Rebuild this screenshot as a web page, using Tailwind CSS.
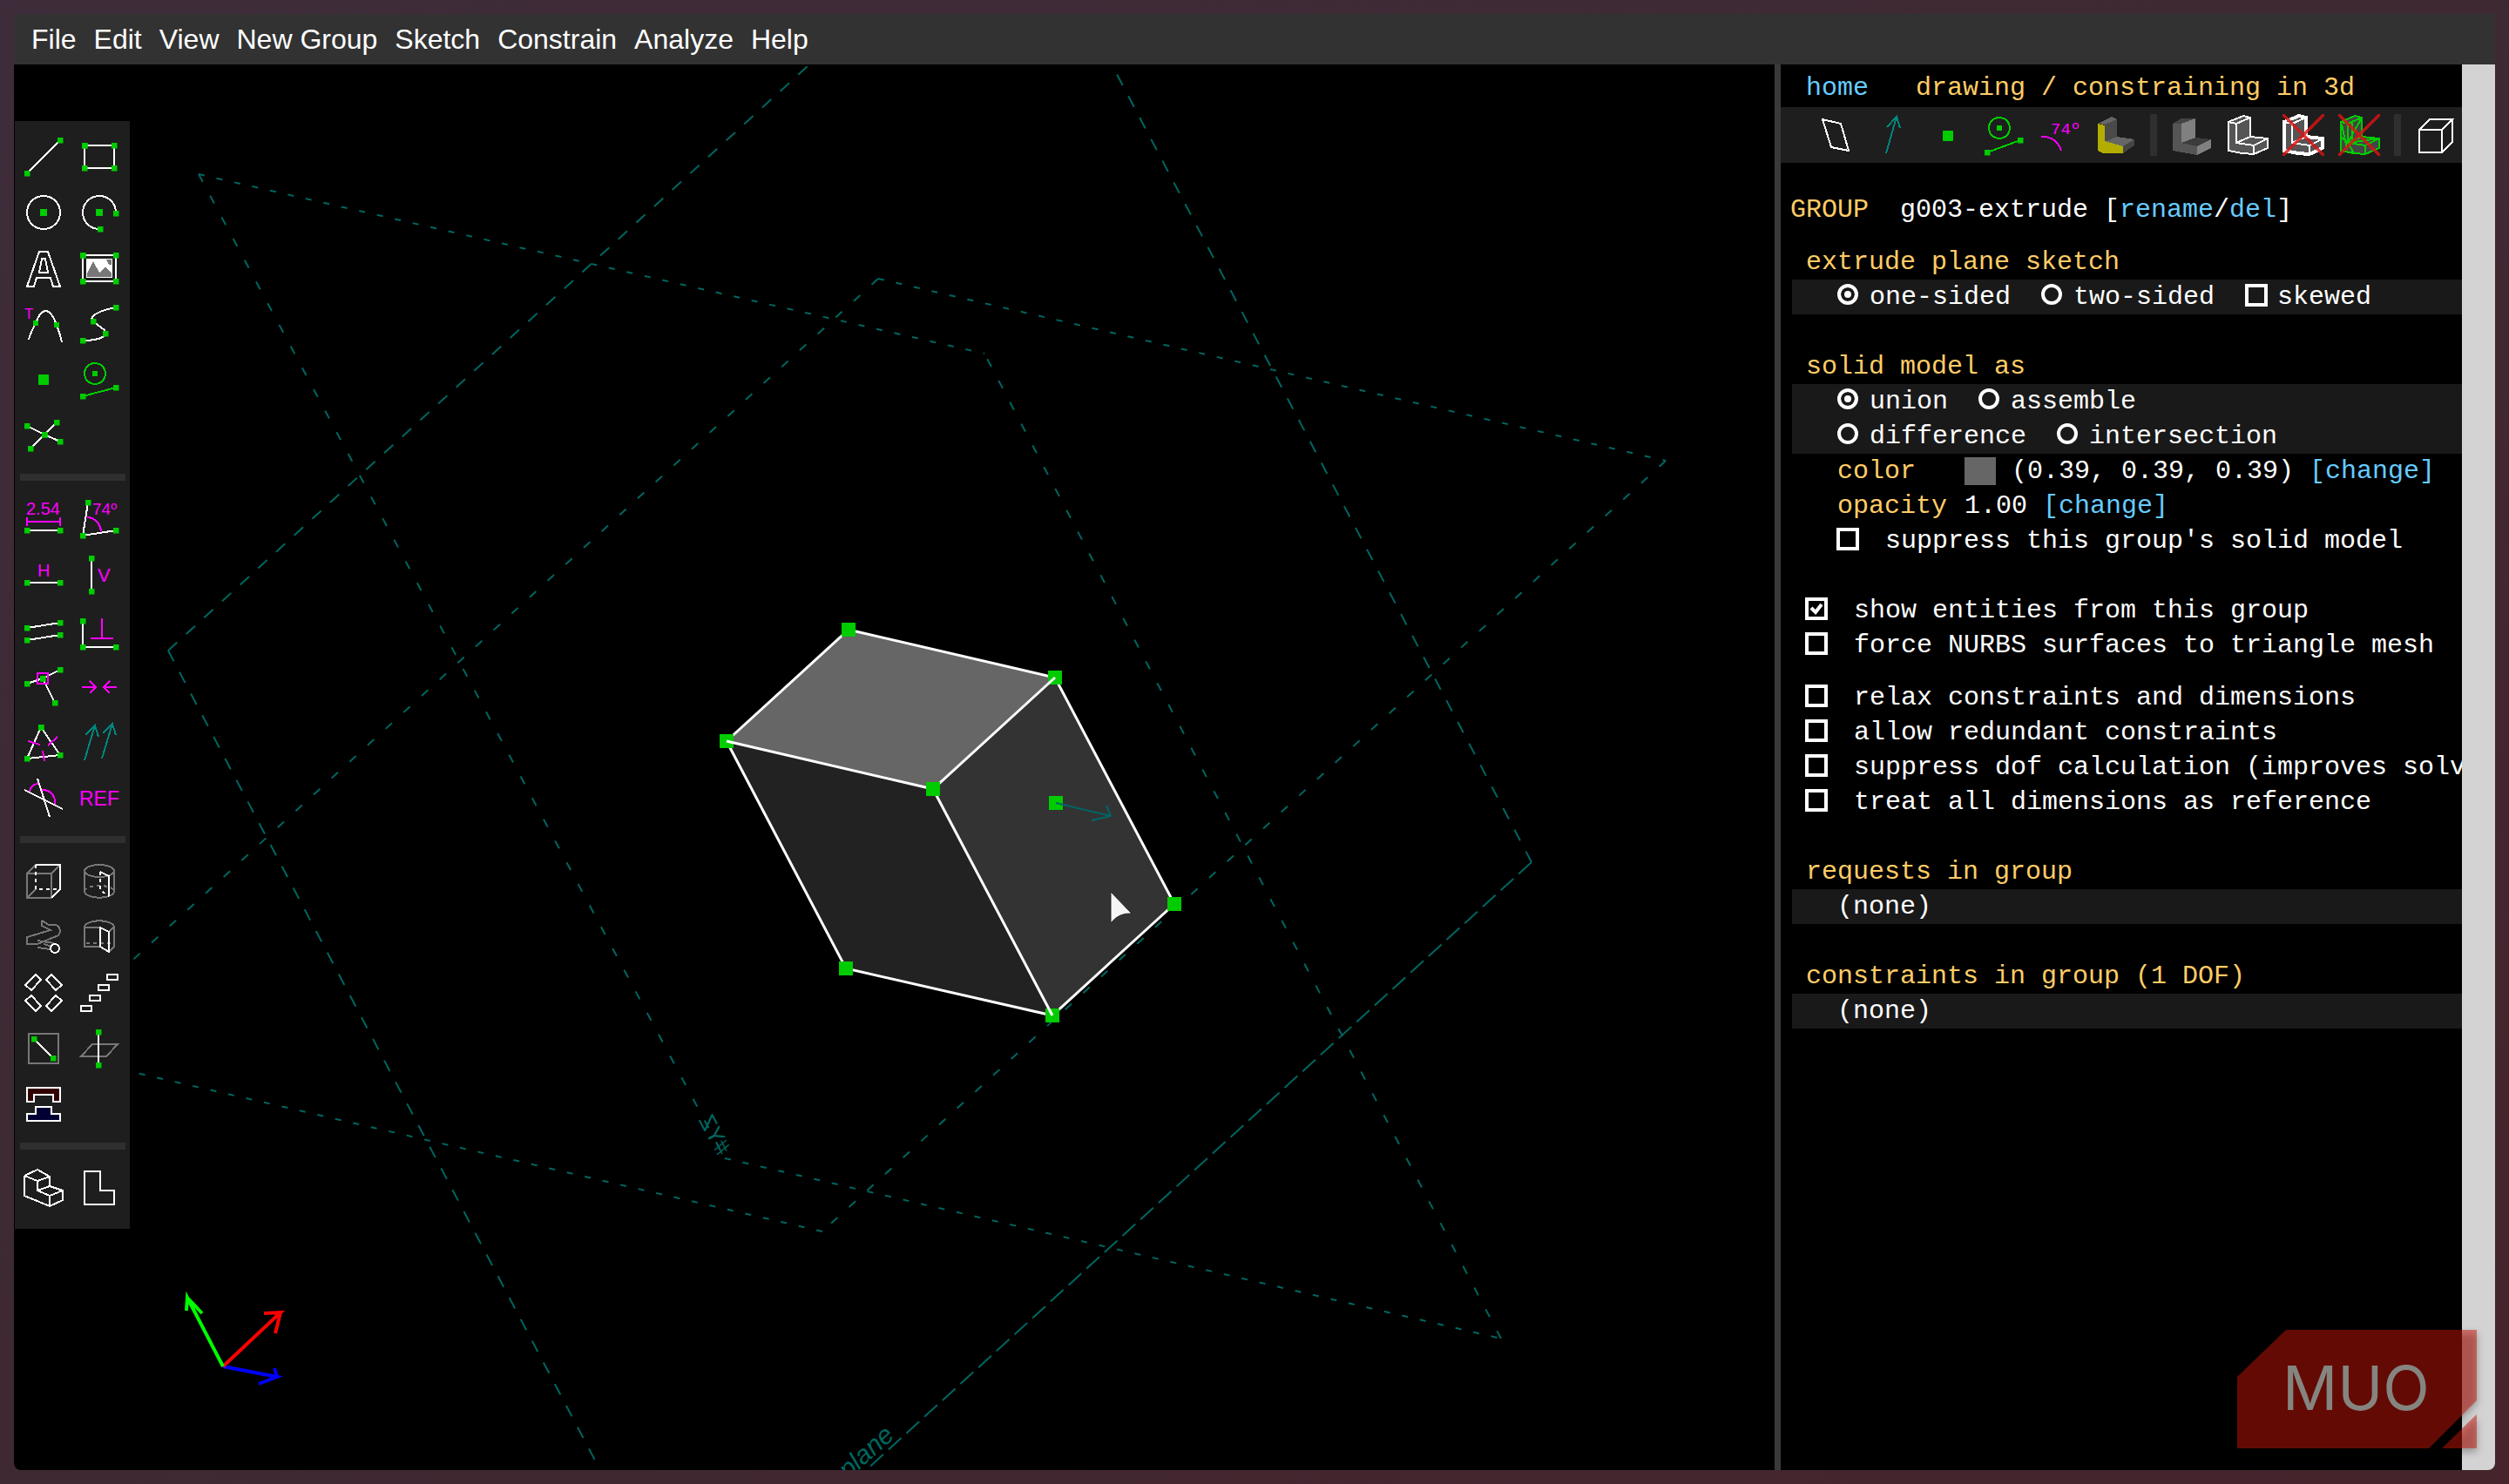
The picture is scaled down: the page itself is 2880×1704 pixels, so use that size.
<!DOCTYPE html>
<html lang="en">
<head>
    <meta charset="UTF-8">
    <meta name="viewport" content="width=device-width, initial-scale=1.0">
    <script src="https://cdn.jsdelivr.net/npm/@tailwindcss/browser@4"></script>
    <title>SolveSpace</title>
</head>
<body class="relative flex h-screen flex-col overflow-hidden bg-linear-to-br from-[#3f2c3a] via-[#3e2932] to-[#46242c] p-4 font-['Liberation_Sans',sans-serif]">

    <!-- Shared markers: green end points -->
    <svg class="absolute size-0" aria-hidden="true">
        <defs>
            <marker id="dot" markerUnits="userSpaceOnUse" markerWidth="7" markerHeight="7" refX="3.5" refY="3.5">
                <rect width="7" height="7" fill="#00cc00" />
            </marker>
            <marker id="vertex" markerUnits="userSpaceOnUse" markerWidth="16" markerHeight="16" refX="8" refY="8">
                <rect width="16" height="16" fill="#00cc00" />
            </marker>
        </defs>
    </svg>

    <!-- Menu bar -->
    <nav class="flex h-[58px] shrink-0 items-center gap-5 bg-[#323232] pl-5 text-[32px] text-white">
        <button>File</button>
        <button>Edit</button>
        <button>View</button>
        <button>New Group</button>
        <button>Sketch</button>
        <button>Constrain</button>
        <button>Analyze</button>
        <button>Help</button>
    </nav>

    <div class="flex min-h-0 flex-1 overflow-hidden rounded-b-lg bg-black">

        <!-- Canvas -->
        <main class="relative min-w-0 flex-1 overflow-hidden">
            <svg class="absolute inset-0 size-full" viewBox="16 74 2021 1614" preserveAspectRatio="xMinYMin slice" fill="none">
                <!-- Work planes -->
                <g stroke="#00665f" stroke-width="2">
                    <path stroke-dasharray="7 14" d="M228 200L1130 406M832 1330L1723 1537M1008 320L1912 529M944 1414L40 1205" />
                    <path stroke-dasharray="10 18" d="M228 200L832 1330M1723 1537L1130 406M1008 320L40 1205M1912 529L944 1414" />
                    <path stroke-dasharray="14 14" d="M193 747L927 76M193 747L690 1690M1758 990L1274 70" />
                    <path stroke-dasharray="20 8" d="M1758 990L992 1690" />
                </g>
                <g fill="#00665f" font-size="26">
                    <text transform="translate(824 1328) rotate(62) scale(-1 1)">#YZ</text>
                    <text transform="translate(1028 1650) rotate(-42)" text-anchor="end" font-style="italic" font-size="30">plane</text>
                </g>

                <!-- Solid -->
                <path fill="#666666" d="M974 723L1211 778L1071 906L834 851Z" />
                <path fill="#333333" d="M1211 778L1348 1038L1208 1166L1071 906Z" />
                <path fill="#222222" d="M834 851L1071 906L1208 1166L971 1112Z" />
                <path class="[marker:url(#vertex)]" stroke="#ffffff" stroke-width="3" d="M974 723L1211 778L1348 1038L1208 1166L971 1112L834 851Z" />
                <path stroke="#ffffff" stroke-width="3" d="M834 851L1071 906L1211 778M1071 906L1208 1166" />
                <rect x="1063" y="898" width="16" height="16" fill="#00cc00" />
                <rect x="1204" y="914" width="16" height="16" fill="#00cc00" />
                <path stroke="#006666" stroke-width="2" d="M1212 922L1275 937L1253 942M1275 937L1270 925" />

                <!-- Axes -->
                <g stroke-width="4">
                    <path stroke="#0000ff" d="M256 1569L318 1581L297 1589M318 1581L315 1571" />
                    <path stroke="#ff0000" d="M256 1569L322 1507L303 1508M322 1507L316 1531" />
                    <path stroke="#00ff00" d="M256 1569L215 1490L214 1505M215 1490L232 1508" />
                </g>

                <!-- Pointer -->
                <path fill="#f5f5f5" stroke="#222222" d="M1275 1024L1299 1049Q1284 1048 1275 1060Z" />
            </svg>

            <!-- Floating toolbar -->
            <div class="absolute left-px top-[65px] w-[132px] bg-[#1e1e1e] pr-[3px] pl-px pt-[9px] pb-[15px]">
                <div class="grid grid-cols-2">
                    <button class="grid h-16 place-items-center" aria-label="Line segment"><svg class="size-12" fill="none" stroke="#fff" stroke-width="2" shape-rendering="crispEdges"><path class="[marker:url(#dot)]" d="M5 43L43 5" /></svg></button>
                    <button class="grid h-16 place-items-center" aria-label="Rectangle"><svg class="size-12" fill="none" stroke="#fff" stroke-width="2" shape-rendering="crispEdges"><path class="[marker:url(#dot)]" d="M7 11H41V37H7Z" /></svg></button>
                    <button class="grid h-16 place-items-center" aria-label="Circle"><svg class="size-12" fill="none" stroke="#fff" stroke-width="2" shape-rendering="crispEdges"><circle cx="24" cy="24" r="19" /><path fill="#00cc00" stroke="none" d="M20 20h8v8h-8z" /></svg></button>
                    <button class="grid h-16 place-items-center" aria-label="Arc"><svg class="size-12" fill="none" stroke="#fff" stroke-width="2" shape-rendering="crispEdges"><path class="[marker:url(#dot)]" d="M43 25A19 19 0 1 0 25 43" /><path fill="#00cc00" stroke="none" d="M20 20h8v8h-8z" /></svg></button>
                    <button class="grid h-16 place-items-center" aria-label="Text"><svg class="size-12" fill="none" stroke="#fff" stroke-width="2" shape-rendering="crispEdges"><path d="M19 5H29L43 45H35L32 35H16L13 45H5ZM22 13H26L29 29H19Z" /></svg></button>
                    <button class="grid h-16 place-items-center" aria-label="Image"><svg class="size-12" fill="none" stroke="#fff" stroke-width="2" shape-rendering="crispEdges"><path fill="#fff" stroke="none" d="M9 13H39V35H9Z" /><path fill="#777" stroke="none" d="M10 34V30L17 16L24 29L31 23L38 30V34ZM32 14h6v6h-3z" /><path class="[marker:url(#dot)]" d="M5 9H43V39H5Z" /></svg></button>
                    <button class="grid h-16 place-items-center" aria-label="Tangent arc"><svg class="size-12" fill="none" stroke="#fff" stroke-width="2" shape-rendering="crispEdges"><text x="2" y="18" font-size="17" fill="#ff00ff" stroke="none">T</text><path d="M7 42Q9 34 15 23Q20 9 27 9Q33 9 39 25Q43 36 45 45" /><path fill="#00cc00" stroke="none" d="M12 20h6v6h-6zM36 22h6v6h-6z" /></svg></button>
                    <button class="grid h-16 place-items-center" aria-label="Spline"><svg class="size-12" fill="none" stroke="#fff" stroke-width="2" shape-rendering="crispEdges"><path class="[marker:url(#dot)]" d="M43 5C26 8 10 15 17 21C26 29 32 30 31 35C29 41 16 43 5 43" /></svg></button>
                    <button class="grid h-16 place-items-center" aria-label="Point"><svg class="size-12"><rect x="18" y="18" width="12" height="12" rx="1" fill="#00cc00" /></svg></button>
                    <button class="grid h-16 place-items-center" aria-label="Construction"><svg class="size-12" fill="none" stroke="#00cc00" stroke-width="2" shape-rendering="crispEdges"><circle cx="19" cy="17" r="12" /><path fill="#00cc00" stroke="none" d="M16 14h6v6h-6z" /><path class="[marker:url(#dot)]" d="M5 43L43 33" /></svg></button>
                    <button class="grid h-16 place-items-center" aria-label="Split curves"><svg class="size-12" fill="none" stroke="#fff" stroke-width="2" shape-rendering="crispEdges"><path class="[marker:url(#dot)]" d="M5 13L25 23L43 31M39 9L25 23L9 39" /></svg></button>
                </div>
                <hr class="mr-0.5 ml-[5px] my-3 h-2 border-0 bg-[#2f2f2f]">
                <div class="grid grid-cols-2">
                    <button class="grid h-16 place-items-center" aria-label="Distance"><svg class="size-12" fill="none" stroke="#fff" stroke-width="2" shape-rendering="crispEdges"><text x="4" y="19" font-size="20" fill="#ff00ff" stroke="none">2.54</text><path stroke="#ff00ff" d="M5 27H43M5 22V32M43 22V32" /><path class="[marker:url(#dot)]" d="M5 37H43" /></svg></button>
                    <button class="grid h-16 place-items-center" aria-label="Angle"><svg class="size-12" fill="none" stroke="#fff" stroke-width="2" shape-rendering="crispEdges"><path stroke="#ff00ff" d="M10 22C18 22 25 29 26 38" /><text x="16" y="19" font-size="19" fill="#ff00ff" stroke="none">74º</text><path class="[marker:url(#dot)]" d="M11 5L5 43L43 37" /></svg></button>
                    <button class="grid h-16 place-items-center" aria-label="Horizontal"><svg class="size-12" fill="none" stroke="#fff" stroke-width="2" shape-rendering="crispEdges"><text x="17" y="26" font-size="20" fill="#ff00ff" stroke="none">H</text><path class="[marker:url(#dot)]" d="M5 33H43" /></svg></button>
                    <button class="grid h-16 place-items-center" aria-label="Vertical"><svg class="size-12" fill="none" stroke="#fff" stroke-width="2" shape-rendering="crispEdges"><text x="22" y="32" font-size="22" fill="#ff00ff" stroke="none">V</text><path class="[marker:url(#dot)]" d="M15 5V43" /></svg></button>
                    <button class="grid h-16 place-items-center" aria-label="Parallel"><svg class="size-12" fill="none" stroke="#fff" stroke-width="2" shape-rendering="crispEdges"><path class="[marker:url(#dot)]" d="M5 21L43 15M5 35L43 29" /></svg></button>
                    <button class="grid h-16 place-items-center" aria-label="Perpendicular"><svg class="size-12" fill="none" stroke="#fff" stroke-width="2" shape-rendering="crispEdges"><path stroke="#ff00ff" d="M27 10V33M14 33H40" /><path class="[marker:url(#dot)]" d="M5 13V43H43" /></svg></button>
                    <button class="grid h-16 place-items-center" aria-label="Point on line"><svg class="size-12" fill="none" stroke="#fff" stroke-width="2" shape-rendering="crispEdges"><path class="[marker:url(#dot)]" d="M5 21L23 15L43 5M23 15L37 43" /><path stroke="#ff00ff" d="M17 9H29V21H17Z" /></svg></button>
                    <button class="grid h-16 place-items-center" aria-label="Symmetric"><svg class="size-12" fill="none" stroke="#ff00ff" stroke-width="2" shape-rendering="crispEdges"><path d="M4 25H20M13 18L20 25L13 32M44 25H29M36 18L29 25L36 32" /></svg></button>
                    <button class="grid h-16 place-items-center" aria-label="Equal"><svg class="size-12" fill="none" stroke="#fff" stroke-width="2" shape-rendering="crispEdges"><path class="[marker:url(#dot)]" d="M21 7L5 43L43 39Z" /><path stroke="#ff00ff" d="M6 23L20 27M40 18L29 28M23 34L25 46" /></svg></button>
                    <button class="grid h-16 place-items-center" aria-label="Same orientation"><svg class="size-12" fill="none" stroke="#00857c" stroke-width="2" shape-rendering="crispEdges"><path d="M7 45L19 5M8 16L19 5L23 18M27 43L39 3M28 14L39 3L43 16" /></svg></button>
                    <button class="grid h-16 place-items-center" aria-label="Other angle"><svg class="size-12" fill="none" stroke="#fff" stroke-width="2" shape-rendering="crispEdges"><path stroke="#ff00ff" d="M8 17C9 11 12 8 18 8M20 16C30 13 38 20 37 32" /><path d="M2 15L46 37M17 2L31 46" /></svg></button>
                    <button class="grid h-16 place-items-center" aria-label="Reference dimension"><svg class="size-12" fill="#ff00ff"><text x="1" y="33" font-size="23">REF</text></svg></button>
                </div>
                <hr class="mr-0.5 ml-[5px] my-3 h-2 border-0 bg-[#2f2f2f]">
                <div class="grid grid-cols-2">
                    <button class="grid h-16 place-items-center" aria-label="Extrude"><svg class="size-12" fill="none" stroke="#777" stroke-width="2" shape-rendering="crispEdges"><path d="M5 15H33V43H5ZM5 15L15 5M33 15L43 5M5 43L15 33" /><path stroke="#fff" d="M15 5H43V33L33 43" /><path stroke="#fff" stroke-dasharray="4 4" d="M15 5V33H43" /></svg></button>
                    <button class="grid h-16 place-items-center" aria-label="Lathe"><svg class="size-12" fill="none" stroke="#777" stroke-width="2" shape-rendering="crispEdges"><ellipse cx="24" cy="12" rx="17" ry="7" /><path d="M7 12V36C10 45 38 45 41 36V12" /><path stroke-dasharray="4 4" d="M7 35C10 27 38 27 41 35" /><path stroke="#fff" d="M25 13L35 18V41" /><path stroke="#fff" stroke-dasharray="4 4" d="M25 13V34L35 41" /></svg></button>
                    <button class="grid h-16 place-items-center" aria-label="Helix"><svg class="size-12" fill="none" stroke="#777" stroke-width="2" shape-rendering="crispEdges"><path d="M22 5V11L32 16L5 24V32H17L41 22C45 16 42 10 36 10H30L22 5M17 28L36 31M17 36L32 38M24 32L34 35" /><circle cx="37" cy="37" r="5" stroke="#fff" /></svg></button>
                    <button class="grid h-16 place-items-center" aria-label="Revolve"><svg class="size-12" fill="none" stroke="#777" stroke-width="2" shape-rendering="crispEdges"><path d="M25 35H7V12C10 3 38 3 41 12V35L35 41M7 13H25M41 12L35 18" /><path stroke-dasharray="4 4" d="M9 31H39" /><path stroke="#fff" d="M25 13L35 18V41L25 35Z" /></svg></button>
                    <button class="grid h-16 place-items-center" aria-label="Step rotating"><svg class="size-12" fill="none" stroke="#fff" stroke-width="2" shape-rendering="crispEdges"><path d="M15 3L21 9L10 21L3 15ZM33 3L27 9L38 21L45 15ZM15 45L21 39L10 27L3 33ZM33 45L27 39L38 27L45 33Z" /></svg></button>
                    <button class="grid h-16 place-items-center" aria-label="Step translating"><svg class="size-12" fill="none" stroke="#fff" stroke-width="2" shape-rendering="crispEdges"><path d="M33 3h12v6h-12zM23 15h12v6h-12zM13 27h12v6h-12zM3 39h12v6h-12z" /></svg></button>
                    <button class="grid h-16 place-items-center" aria-label="Sketch in workplane"><svg class="size-12" fill="none" stroke="#fff" stroke-width="2" shape-rendering="crispEdges"><path stroke="#777" d="M7 7H41V41H7Z" /><path class="[marker:url(#dot)]" d="M13 13L35 35" /></svg></button>
                    <button class="grid h-16 place-items-center" aria-label="Sketch in 3d"><svg class="size-12" fill="none" stroke="#fff" stroke-width="2" shape-rendering="crispEdges"><path stroke="#777" d="M16 19H45L32 33H3Z" /><path class="[marker:url(#dot)]" d="M23 5V43" /></svg></button>
                    <button class="grid h-16 place-items-center" aria-label="Assemble"><svg class="size-12" stroke="#fff" stroke-width="2" shape-rendering="crispEdges"><path fill="#330000" d="M5 5H43V21H35V13H13V21H5Z" /><path fill="#000033" d="M5 43H43V35H33V27H15V35H5Z" /></svg></button>
                </div>
                <hr class="mr-0.5 ml-[5px] my-3 h-2 border-0 bg-[#2f2f2f]">
                <div class="grid grid-cols-2">
                    <button class="grid h-16 place-items-center" aria-label="Nearest isometric view"><svg class="size-12" fill="none" stroke="#fff" stroke-width="2" shape-rendering="crispEdges"><path d="M2 10L17 3L31 11V22L17 27V16L31 11M2 10L17 16M2 10V33L31 45L46 38V27L31 22M17 27L31 33V45M31 33L46 27" /></svg></button>
                    <button class="grid h-16 place-items-center" aria-label="Align to workplane"><svg class="size-12" fill="none" stroke="#fff" stroke-width="2" shape-rendering="crispEdges"><path d="M7 5H25V27H41V43H7Z" /></svg></button>
                </div>
            </div>
        </main>

        <!-- Property browser -->
        <aside class="flex w-[827px] shrink-0 border-l-7 border-[#3a3a3a]">
            <div class="min-w-0 flex-1 overflow-hidden whitespace-nowrap pt-[7px] font-['Liberation_Mono',monospace] text-[30px] leading-10 text-white">
                <header class="flex gap-[54px] pl-[29px] text-[#ffcc66]">
                    <a href="#" class="text-[#66ccff]">home</a>
                    <h1>drawing / constraining in 3d</h1>
                </header>

                <div class="mt-0.5 flex h-16 items-center bg-[#1e1e1e] pl-8">
                    <button class="grid size-16 shrink-0 place-items-center" aria-label="Show workplanes"><svg class="size-12" fill="none" stroke="#fff" stroke-width="2" shape-rendering="crispEdges"><path d="M8 6L29 11L38 42L18 38Z" /></svg></button>
                    <button class="grid size-16 shrink-0 place-items-center" aria-label="Show normals"><svg class="size-12" fill="none" stroke="#00857c" stroke-width="2" shape-rendering="crispEdges"><path d="M17 45L29 3M18 15L29 3L33 16" /></svg></button>
                    <button class="grid size-16 shrink-0 place-items-center" aria-label="Show points"><svg class="size-12"><rect x="18" y="19" width="12" height="12" rx="1" fill="#00cc00" /></svg></button>
                    <button class="grid size-16 shrink-0 place-items-center" aria-label="Show construction"><svg class="size-12" fill="none" stroke="#00cc00" stroke-width="2" shape-rendering="crispEdges"><circle cx="19" cy="16" r="12" /><path fill="#00cc00" stroke="none" d="M16 13h6v6h-6z" /><path class="[marker:url(#dot)]" d="M5 44L43 30" /></svg></button>
                    <button class="grid size-16 shrink-0 place-items-center" aria-label="Show constraints"><svg class="size-12" fill="none" stroke="#ff00ff" stroke-width="2" shape-rendering="crispEdges"><text x="14" y="23" font-size="19" fill="#ff00ff" stroke="none">74º</text><path d="M3 26C14 25 23 32 26 42" /></svg></button>
                    <button class="grid size-16 shrink-0 place-items-center" aria-label="Highlight faces"><svg class="size-12" shape-rendering="crispEdges"><path fill="#666" d="M4 11L20 3L26 6L12 12Z" /><path fill="#4a4a4a" d="M12 12L26 6V27L12 32Z" /><path fill="#666" d="M12 32L26 26L46 29L33 37Z" /><path fill="#444" d="M33 37L46 29V36L33 45Z" /><path fill="#b3ad00" d="M4 11L12 13V31L33 37V45H10L4 42Z" /></svg></button>
                    <span class="mx-2 h-12 w-2 shrink-0 bg-[#2f2f2f]"></span>
                    <button class="grid size-16 shrink-0 place-items-center" aria-label="Show shaded"><svg class="size-12" shape-rendering="crispEdges"><path fill="#444" d="M2 11L12 5H28L12 11Z" /><path fill="#555" d="M2 11H12V33L30 37V47L2 42Z" /><path fill="#808080" d="M12 11L28 5V27L12 33Z" /><path fill="#3c3c3c" d="M12 33L28 27L46 29L30 37Z" /><path fill="#808080" d="M30 37L46 29V39L30 47Z" /></svg></button>
                    <button class="grid size-16 shrink-0 place-items-center" aria-label="Show edges"><svg class="size-12" fill="#555" stroke="#fff" stroke-width="2" shape-rendering="crispEdges"><path d="M2 9L19 2L27 4V26L47 28V39L31 46L18 45L2 42Z" /><path d="M2 9L11 11L27 4M11 11V33L31 36V46M11 33L27 26M31 36L47 28" /></svg></button>
                    <button class="grid size-16 shrink-0 place-items-center" aria-label="Show outlines"><svg class="size-12" fill="#555" stroke="#fff" shape-rendering="crispEdges"><path stroke-width="4" d="M2 9L19 2L27 4V26L46 28V39L31 46L18 45L2 42Z" /><path stroke-width="2" d="M2 9L11 11L27 4M11 11V33L31 36V46M11 33L27 26M31 36L47 28" /><path stroke="#dd1111" stroke-opacity=".8" stroke-width="3" d="M0 0L48 48M48 0L0 48" /></svg></button>
                    <button class="grid size-16 shrink-0 place-items-center" aria-label="Show mesh"><svg class="size-12" fill="#444444" stroke="#00cc00" stroke-width="2" shape-rendering="crispEdges"><path d="M3 9L19 2L27 4V26L47 28V39L31 46L18 45L3 42Z" /><path fill="none" d="M3 9L11 11L27 4M11 11V33L31 36V46M11 33L27 26M31 36L47 28M11 33L27 4M16 10V29M3 26L11 33L18 45M11 33L47 28M4 12L10 40" /><path stroke="#dd1111" stroke-opacity=".8" stroke-width="3" d="M0 0L48 48M48 0L0 48" /></svg></button>
                    <span class="mx-2 h-12 w-2 shrink-0 bg-[#2f2f2f]"></span>
                    <button class="grid size-16 shrink-0 place-items-center" aria-label="Show hidden lines"><svg class="size-12" fill="none" stroke="#fff" stroke-width="2" shape-rendering="crispEdges"><path d="M5 18H31V44H5ZM5 18L17 6H43L31 18M43 6V32L31 44" /></svg></button>
                </div>

                <p class="mt-[34px] pl-[11px]"><span class="mr-9 text-[#ffcc66]">GROUP</span>g003-extrude [<a href="#" class="text-[#66ccff]">rename</a>/<a href="#" class="text-[#66ccff]">del</a>]</p>

                <h2 class="mt-5 pl-[29px] text-[#ffcc66]">extrude plane sketch</h2>
                <div class="ml-[13px] flex gap-[35px] bg-[#191919] pl-[52px]">
                    <label class="flex gap-[13px]"><input type="radio" name="sides" checked class="mt-[5px] size-6 appearance-none rounded-full border-4 border-white checked:bg-white checked:inset-shadow-[0_0_0_4px_#191919]">one-sided</label>
                    <label class="flex gap-[13px]"><input type="radio" name="sides" class="mt-[5px] size-6 appearance-none rounded-full border-4 border-white checked:bg-white checked:inset-shadow-[0_0_0_4px_#191919]">two-sided</label>
                    <label class="flex gap-[11px]"><input type="checkbox" class="mt-[5px] size-[26px] appearance-none border-4 border-white">skewed</label>
                </div>

                <h2 class="mt-10 pl-[29px] text-[#ffcc66]">solid model as</h2>
                <div class="ml-[13px] bg-[#191919] pl-[52px]">
                    <div class="flex gap-[35px]">
                        <label class="flex gap-[13px]"><input type="radio" name="combine" checked class="mt-[5px] size-6 appearance-none rounded-full border-4 border-white checked:bg-white checked:inset-shadow-[0_0_0_4px_#191919]">union</label>
                        <label class="flex gap-[13px]"><input type="radio" name="combine" class="mt-[5px] size-6 appearance-none rounded-full border-4 border-white checked:bg-white checked:inset-shadow-[0_0_0_4px_#191919]">assemble</label>
                    </div>
                    <div class="flex gap-[35px]">
                        <label class="flex gap-[13px]"><input type="radio" name="combine" class="mt-[5px] size-6 appearance-none rounded-full border-4 border-white checked:bg-white checked:inset-shadow-[0_0_0_4px_#191919]">difference</label>
                        <label class="flex gap-[13px]"><input type="radio" name="combine" class="mt-[5px] size-6 appearance-none rounded-full border-4 border-white checked:bg-white checked:inset-shadow-[0_0_0_4px_#191919]">intersection</label>
                    </div>
                </div>
                <div class="flex items-center pl-[65px]"><span class="w-[146px] text-[#ffcc66]">color</span><span class="mr-[18px] h-8 w-9 bg-[#666666]"></span><span class="mr-[18px]">(0.39, 0.39, 0.39)</span><a href="#" class="text-[#66ccff]">[change]</a></div>
                <div class="flex pl-[65px]"><span class="w-[146px] text-[#ffcc66]">opacity</span><span class="mr-[18px]">1.00</span><a href="#" class="text-[#66ccff]">[change]</a></div>
                <label class="flex gap-[30px] pl-16"><input type="checkbox" class="mt-[5px] size-[26px] appearance-none border-4 border-white">suppress this group's solid model</label>

                <div class="mt-10 pl-7">
                    <label class="flex gap-[30px]">
                        <span class="grid">
                            <input type="checkbox" checked class="peer col-start-1 row-start-1 mt-[5px] size-[26px] appearance-none border-4 border-white">
                            <svg class="invisible col-start-1 row-start-1 mt-[5px] size-[26px] peer-checked:visible" fill="none" stroke="#fff" stroke-width="4"><path d="M7 12L12 17L19 8" /></svg>
                        </span>show entities from this group
                    </label>
                    <label class="flex gap-[30px]"><input type="checkbox" class="mt-[5px] size-[26px] appearance-none border-4 border-white">force NURBS surfaces to triangle mesh</label>
                </div>
                <div class="mt-5 pl-7">
                    <label class="flex gap-[30px]"><input type="checkbox" class="mt-[5px] size-[26px] appearance-none border-4 border-white">relax constraints and dimensions</label>
                    <label class="flex gap-[30px]"><input type="checkbox" class="mt-[5px] size-[26px] appearance-none border-4 border-white">allow redundant constraints</label>
                    <label class="flex gap-[30px]"><input type="checkbox" class="mt-[5px] size-[26px] shrink-0 appearance-none border-4 border-white">suppress dof calculation (improves solv</label>
                    <label class="flex gap-[30px]"><input type="checkbox" class="mt-[5px] size-[26px] appearance-none border-4 border-white">treat all dimensions as reference</label>
                </div>

                <h2 class="mt-10 pl-[29px] text-[#ffcc66]">requests in group</h2>
                <p class="ml-[13px] bg-[#191919] pl-[52px]">(none)</p>

                <h2 class="mt-10 pl-[29px] text-[#ffcc66]">constraints in group (1 DOF)</h2>
                <p class="ml-[13px] bg-[#191919] pl-[52px]">(none)</p>
            </div>
            <!-- Scrollbar -->
            <div class="w-[38px] shrink-0 bg-[#d3d3d3]"></div>
        </aside>
    </div>

    <!-- Watermark -->
    <div class="absolute right-[37px] bottom-[41px] h-[136px] w-[275px]">
        <svg class="absolute inset-0 size-full drop-shadow-[0_4px_4px_rgba(0,0,0,0.6)]" fill="rgb(200 20 8 / 0.5)">
            <path d="M0 54L56 0H275V81L220 136H0ZM275 97V136H235Z" />
        </svg>
        <span class="absolute top-[24px] left-[52px] font-['Inter',sans-serif] text-[70px] leading-[85px] text-[#858580]">MUO</span>
    </div>

</body>
</html>
